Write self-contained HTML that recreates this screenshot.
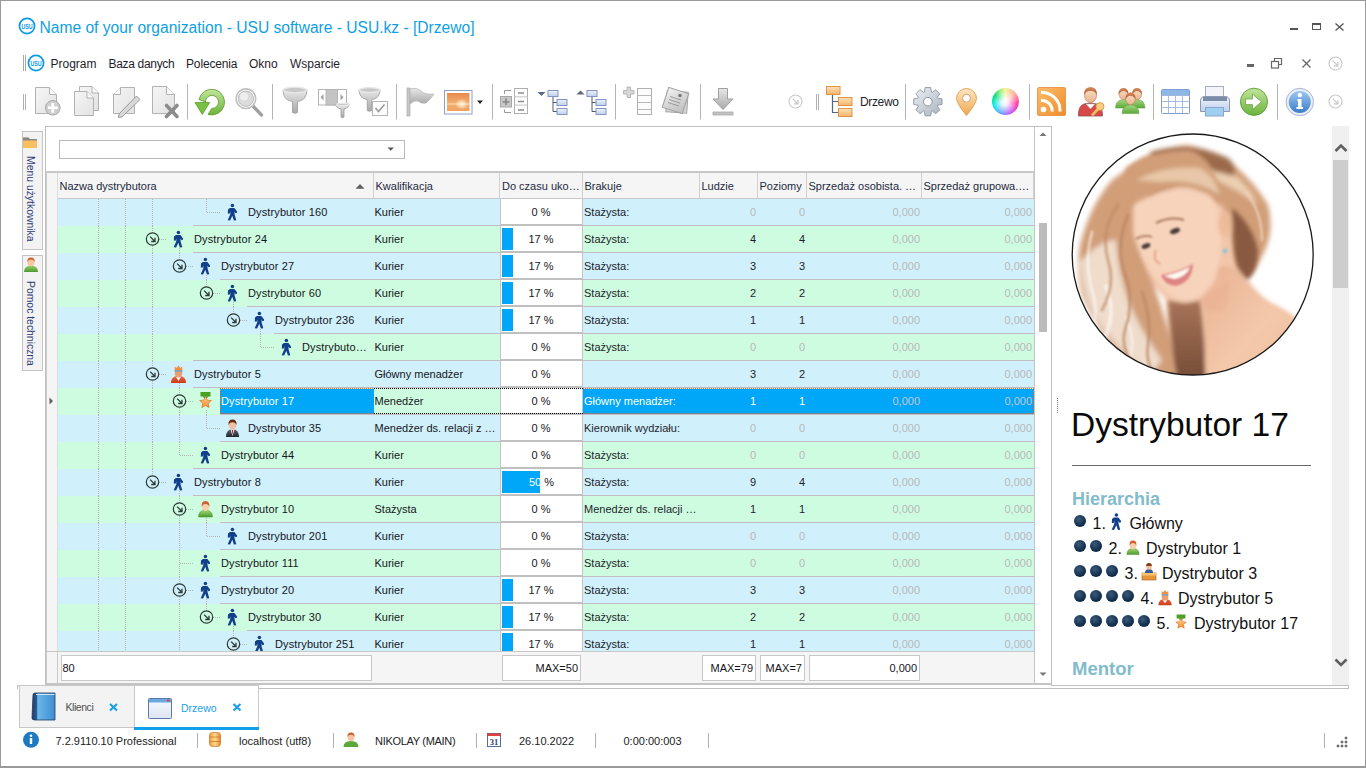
<!DOCTYPE html><html><head><meta charset="utf-8"><style>
*{margin:0;padding:0;box-sizing:border-box}
html,body{width:1366px;height:768px;overflow:hidden;background:#fff;font-family:"Liberation Sans", sans-serif;}
.a{position:absolute}
.t{position:absolute;white-space:nowrap;font-size:11px;line-height:13px;color:#161620}
svg{position:absolute;overflow:visible}
</style></head><body>
<div class="a" style="left:0;top:0;width:1366px;height:768px;border:1px solid #9a9a9a;border-bottom-width:2px"></div><svg style="left:18px;top:17px" width="18" height="18" viewBox="0 0 18 18"><circle cx="9" cy="9" r="7.6" fill="none" stroke="#0a9ae6" stroke-width="1.7"/><text x="3.4000000000000004" y="11.5" font-family="Liberation Sans" font-weight="bold" font-size="7" fill="#0a9ae6" textLength="11.2" lengthAdjust="spacingAndGlyphs">USU</text></svg><div class="t" style="left:39.5px;top:18.5px;font-size:15.6px;line-height:18px;color:#0f9fe4">Name of your organization - USU software - USU.kz - [Drzewo]</div><div class="a" style="left:1290px;top:28px;width:8px;height:2px;background:#555"></div><div class="a" style="left:1312px;top:23px;width:9px;height:7px;border:1px solid #555;border-top-width:2px"></div><svg style="left:1335px;top:23px" width="9" height="8" viewBox="0 0 9 8"><path d="M0.5 0.5L8.5 7.5M8.5 0.5L0.5 7.5" stroke="#555" stroke-width="1.3"/></svg><div class="a" style="left:23px;top:55px;width:1px;height:16px;background:#a8a8a8"></div><div class="a" style="left:25px;top:55px;width:1px;height:16px;background:#a8a8a8"></div><svg style="left:27px;top:54px" width="18" height="18" viewBox="0 0 18 18"><circle cx="9" cy="9" r="7.6" fill="none" stroke="#0a9ae6" stroke-width="1.7"/><text x="3.4000000000000004" y="11.5" font-family="Liberation Sans" font-weight="bold" font-size="7" fill="#0a9ae6" textLength="11.2" lengthAdjust="spacingAndGlyphs">USU</text></svg><div class="t" style="left:50.5px;top:57px;font-size:12px;line-height:15px;letter-spacing:0px;color:#1e1e2a">Program</div><div class="t" style="left:108.5px;top:57px;font-size:12px;line-height:15px;letter-spacing:-0.32px;color:#1e1e2a">Baza danych</div><div class="t" style="left:186px;top:57px;font-size:12px;line-height:15px;letter-spacing:-0.15px;color:#1e1e2a">Polecenia</div><div class="t" style="left:249px;top:57px;font-size:12px;line-height:15px;letter-spacing:0px;color:#1e1e2a">Okno</div><div class="t" style="left:290px;top:57px;font-size:12px;line-height:15px;letter-spacing:0px;color:#1e1e2a">Wsparcie</div><div class="a" style="left:1247px;top:64px;width:7px;height:3px;background:#666"></div><svg style="left:1271px;top:58px" width="12" height="11" viewBox="0 0 12 11"><path d="M3.5 3.5V0.5H10.5V6.5H7.5" fill="none" stroke="#666" stroke-width="1.2"/><rect x="0.5" y="3.5" width="7" height="6.5" fill="none" stroke="#666" stroke-width="1.2"/></svg><svg style="left:1302px;top:59px" width="9" height="9" viewBox="0 0 9 9"><path d="M0.5 0.5L8.5 8.5M8.5 0.5L0.5 8.5" stroke="#666" stroke-width="1.3"/></svg><svg style="left:1328.0px;top:56.0px" width="15.0" height="15.0" viewBox="-7.5 -7.5 15.0 15.0"><circle cx="0" cy="0" r="6.5" fill="none" stroke="#c8c8c8" stroke-width="1.1"/><path d="M-2.6 -2.6L2.4 2.4M2.4 -1.6V2.4H-1.6" fill="none" stroke="#c8c8c8" stroke-width="1.2000000000000002"/></svg><svg style="left:0;top:0" width="1366" height="130" viewBox="0 0 1366 130"><defs><linearGradient id="gpage" x1="0" y1="0" x2="1" y2="1"><stop offset="0" stop-color="#f6f6f6"/><stop offset="1" stop-color="#e2e2e2"/></linearGradient><linearGradient id="ggray" x1="0" y1="0" x2="0" y2="1"><stop offset="0" stop-color="#e8e8e8"/><stop offset="1" stop-color="#a8a8a8"/></linearGradient><linearGradient id="ggreen" x1="0" y1="0" x2="0" y2="1"><stop offset="0" stop-color="#c2e49a"/><stop offset="1" stop-color="#6cb43c"/></linearGradient><linearGradient id="gorange" x1="0" y1="0" x2="0" y2="1"><stop offset="0" stop-color="#fde2b8"/><stop offset="1" stop-color="#f5b46a"/></linearGradient><linearGradient id="gsun" x1="0" y1="0" x2="0" y2="1"><stop offset="0" stop-color="#e9894c"/><stop offset="0.6" stop-color="#f2b070"/><stop offset="1" stop-color="#f0a060"/></linearGradient><radialGradient id="gsun2" cx="0.65" cy="0.62" r="0.3"><stop offset="0" stop-color="#fffbe8"/><stop offset="1" stop-color="#fffbe8" stop-opacity="0"/></radialGradient><linearGradient id="gsilver" x1="0" y1="0" x2="1" y2="1"><stop offset="0" stop-color="#eef1f5"/><stop offset="1" stop-color="#aab2bd"/></linearGradient><linearGradient id="gpin" x1="0" y1="0" x2="0" y2="1"><stop offset="0" stop-color="#fde7c2"/><stop offset="1" stop-color="#f0a850"/></linearGradient><radialGradient id="gwhite" cx="0.5" cy="0.5" r="0.5"><stop offset="0" stop-color="#fff"/><stop offset="0.35" stop-color="#fff" stop-opacity="0.7"/><stop offset="1" stop-color="#fff" stop-opacity="0"/></radialGradient><linearGradient id="grss" x1="0" y1="0" x2="1" y2="1"><stop offset="0" stop-color="#fbbd6a"/><stop offset="1" stop-color="#f08c2c"/></linearGradient><linearGradient id="gblue" x1="0" y1="0" x2="0" y2="1"><stop offset="0" stop-color="#9cc8f0"/><stop offset="1" stop-color="#3d7cc8"/></linearGradient><linearGradient id="gtree" x1="0" y1="0" x2="0" y2="1"><stop offset="0" stop-color="#eef3fb"/><stop offset="1" stop-color="#bcd0ee"/></linearGradient><linearGradient id="gskin" x1="0" y1="0" x2="0" y2="1"><stop offset="0" stop-color="#fbe0c8"/><stop offset="1" stop-color="#eab48e"/></linearGradient><linearGradient id="ghair" x1="0" y1="0" x2="0" y2="1"><stop offset="0" stop-color="#d98a5a"/><stop offset="1" stop-color="#a85a34"/></linearGradient><linearGradient id="gbody" x1="0" y1="0" x2="0" y2="1"><stop offset="0" stop-color="#a8d880"/><stop offset="1" stop-color="#5aa83a"/></linearGradient></defs><path d="M23.5 94V110M25.5 94V110" stroke="#b0b0b0" stroke-width="1"/><path d="M187.5 84V119.5" stroke="#b4b4b4" stroke-width="1"/><path d="M272.5 84V119.5" stroke="#b4b4b4" stroke-width="1"/><path d="M396.5 84V119.5" stroke="#b4b4b4" stroke-width="1"/><path d="M492.5 84V119.5" stroke="#b4b4b4" stroke-width="1"/><path d="M615.5 84V119.5" stroke="#b4b4b4" stroke-width="1"/><path d="M700.5 84V119.5" stroke="#b4b4b4" stroke-width="1"/><path d="M905.5 84V119.5" stroke="#b4b4b4" stroke-width="1"/><path d="M1029.5 84V119.5" stroke="#b4b4b4" stroke-width="1"/><path d="M1153.5 84V119.5" stroke="#b4b4b4" stroke-width="1"/><path d="M1277.5 84V119.5" stroke="#b4b4b4" stroke-width="1"/><path d="M816.5 94V110M818.5 94V110" stroke="#b0b0b0" stroke-width="1"/><path d="M35.5 87.5H49.5L56.5 94.5V113.5H35.5Z" fill="url(#gpage)" stroke="#b2b2b2"/><path d="M49.5 87.5V94.5H56.5" fill="#fafafa" stroke="#b2b2b2"/><circle cx="52.8" cy="107.8" r="7.3" fill="#cfcfcf" stroke="#a8a8a8"/><path d="M52.8 103V112.6M48 107.8H57.6" stroke="#fff" stroke-width="2.6"/><path d="M52.8 103.2V112.4M48.2 107.8H57.4" stroke="#fff" stroke-width="2"/><path d="M79.5 86.5H92L98.5 93V110.5H79.5Z" fill="url(#gpage)" stroke="#b2b2b2"/><path d="M92 86.5V93H98.5" fill="#fafafa" stroke="#b2b2b2"/><path d="M74.5 91.5H87L93.5 98V115.5H74.5Z" fill="url(#gpage)" stroke="#b2b2b2"/><path d="M87 91.5V98H93.5" fill="#fafafa" stroke="#b2b2b2"/><path d="M120.5 87.5H134.5V113.5H113.5V94.5Z" fill="url(#gpage)" stroke="#b2b2b2"/><path d="M120.5 87.5V94.5H113.5" fill="#fafafa" stroke="#b2b2b2"/><path d="M136.5 96L140 99.5L122 117L118.5 117.5L119 114Z" fill="#d8d8d8" stroke="#9a9a9a" stroke-width="1"/><path d="M152.5 86.5H166.5L174.5 94.5V113.5H152.5Z" fill="url(#gpage)" stroke="#b2b2b2"/><path d="M166.5 86.5V94.5H174.5" fill="#fafafa" stroke="#b2b2b2"/><path d="M166.5 105.5L177 116.5M177 105.5L166.5 116.5" stroke="#8c8c8c" stroke-width="3.6" stroke-linecap="round"/><path d="M205.5 102 A6.5 6.5 0 1 1 211.7 108.4 L208 114.5 A12.9 12.9 0 1 0 199 99.5 Z" fill="url(#ggreen)" stroke="#5a9a30" stroke-width="0.8"/><path d="M195 102.5H209.6L202.3 114.5Z" fill="#78c040" stroke="#5a9a30" stroke-width="0.8"/><path d="M252 105L261.5 115" stroke="#a0a0a0" stroke-width="3.4" stroke-linecap="round"/><circle cx="245.9" cy="98.7" r="9.8" fill="#fff" stroke="#c0c0c0" stroke-width="1.6"/><circle cx="245.9" cy="98.7" r="7.6" fill="#dcdcdc" stroke="#b8b8b8"/><circle cx="244" cy="96.5" r="4" fill="#eeeeee"/><path d="M283.0 89.5 Q283.0 100.5 292.5 101.5 V112.5 Q295 114.0 297.5 112.5 V101.5 Q307.0 100.5 307.0 89.5 Z" fill="url(#ggray)" stroke="#9c9c9c" stroke-width="0.8"/><ellipse cx="295" cy="90.0" rx="11.5" ry="2.86" fill="#c8c8c8" stroke="#e8e8e8" stroke-width="1.4"/><rect x="318.5" y="89.5" width="28" height="15.5" fill="#fff" stroke="#b4b4b4"/><rect x="326" y="89.5" width="11.5" height="15.5" fill="#c4c4c4" stroke="#b4b4b4"/><path d="M323.5 94V100.5L320.5 97.2Z M340.5 94V100.5L343.5 97.2Z" fill="#a0a0a0"/><path d="M336.0 104 Q336.0 108 341.0 109 V117 Q342.5 118.5 344.0 117 V109 Q349.0 108 349.0 104 Z" fill="url(#ggray)" stroke="#9c9c9c" stroke-width="0.8"/><ellipse cx="342.5" cy="104.5" rx="6.0" ry="1.32" fill="#c8c8c8" stroke="#e8e8e8" stroke-width="1.4"/><path d="M359.0 89.5 Q359.0 98.5 367.25 99.5 V110.5 Q369.5 112.0 371.75 110.5 V99.5 Q380.0 98.5 380.0 89.5 Z" fill="url(#ggray)" stroke="#9c9c9c" stroke-width="0.8"/><ellipse cx="369.5" cy="90.0" rx="10.0" ry="2.42" fill="#c8c8c8" stroke="#e8e8e8" stroke-width="1.4"/><rect x="372.5" y="101.5" width="15" height="14" fill="#fcfcfc" stroke="#b4b4b4"/><path d="M375.5 108L378.5 111.5L384.5 104.5" fill="none" stroke="#9a9a9a" stroke-width="1.6"/><rect x="407" y="88" width="3" height="28" fill="#c8c8c8" stroke="#a8a8a8" stroke-width="0.7"/><path d="M410 89 Q417 87 421 91 Q425 95 434 94 Q430 100 426 103 Q421 104 418 101 Q414 100 410 104Z" fill="url(#ggray)" stroke="#b0b0b0" stroke-width="0.7"/><rect x="444.5" y="90.5" width="27.5" height="23.5" fill="#fff" stroke="#8aa0c8" stroke-width="1"/><rect x="447" y="93" width="22.5" height="18" fill="url(#gsun)"/><rect x="447" y="93" width="22.5" height="18" fill="url(#gsun2)"/><path d="M447 104H469.5" stroke="#fff4d8" stroke-width="0.8" opacity="0.8"/><path d="M477 100.5H483L480 104Z" fill="#222"/><path d="M504.5 94V90.5H511M504.5 109.5V112.5H511" fill="none" stroke="#9a9a9a" stroke-width="1"/><rect x="500.5" y="96.5" width="11" height="10.5" fill="#c8c8c8" stroke="#a8a8a8"/><path d="M506 98.5V105M502.8 101.8H509.2" stroke="#8c8c8c" stroke-width="1.8"/><rect x="514.5" y="88.5" width="13" height="25" fill="#fff" stroke="#b0b0b0"/><path d="M514.5 96.8H527.5M514.5 105.1H527.5" stroke="#c4c4c4"/><path d="M518 93H524M518 101.5H524M518 110H524" stroke="#8c8c8c" stroke-width="1.6"/><path d="M537.5 92H545.5L541.5 96Z" fill="#5c6a80"/><path d="M553.0 96V111.5H557.0M553.0 102.5H557.0" fill="none" stroke="#4e5a70" stroke-width="1"/><rect x="548.0" y="90.5" width="10" height="6" fill="url(#gtree)" stroke="#8494c4"/><rect x="557.0" y="99.5" width="10" height="6" fill="url(#gtree)" stroke="#8494c4"/><rect x="557.0" y="108.5" width="10" height="6" fill="url(#gtree)" stroke="#8494c4"/><path d="M576.5 94.5H584.5L580.5 90.5Z" fill="#5c6a80"/><path d="M592.0 96V111.5H596.0M592.0 102.5H596.0" fill="none" stroke="#4e5a70" stroke-width="1"/><rect x="587.0" y="90.5" width="10" height="6" fill="url(#gtree)" stroke="#8494c4"/><rect x="596.0" y="99.5" width="10" height="6" fill="url(#gtree)" stroke="#8494c4"/><rect x="596.0" y="108.5" width="10" height="6" fill="url(#gtree)" stroke="#8494c4"/><path d="M623.5 90.5H627V87H630.5V90.5H634V94H630.5V97.5H627V94H623.5Z" fill="#d8d8d8" stroke="#a8a8a8" stroke-width="0.8"/><rect x="637.5" y="88.5" width="14" height="26" fill="#fcfcfc" stroke="#b0b0b0"/><path d="M637.5 95.5H651.5M637.5 102.5H651.5M637.5 109.5H651.5" stroke="#b8b8b8"/><rect x="666.5" y="91.5" width="21" height="21" fill="#d4d4d4" stroke="#a8a8a8" transform="rotate(4 677 102)"/><defs><linearGradient id="gnote" x1="0" y1="0" x2="1" y2="1"><stop offset="0" stop-color="#f2f2f2"/><stop offset="1" stop-color="#bcbcbc"/></linearGradient></defs><rect x="665" y="90" width="21" height="21" fill="url(#gnote)" stroke="#a0a0a0" transform="rotate(18 675.5 100.5)"/><path d="M670 96.5L681 100M669 99.5L680 103M668 102.5L679 106" stroke="#8a8a8a" stroke-width="0.8"/><circle cx="680" cy="95.5" r="1.8" fill="#777"/><path d="M718.5 88.5H727.5V99H733L723 109.5L713 99H718.5Z" fill="url(#ggray)" stroke="#a0a0a0"/><rect x="713" y="112" width="20" height="3" fill="#c4c4c4" stroke="#a0a0a0" stroke-width="0.7"/><path d="M832.5 94V112.5H838.5M832.5 101.5H838.5" fill="none" stroke="#5a6478" stroke-width="1.2"/><rect x="826.5" y="86.5" width="13.5" height="8" fill="url(#gorange)" stroke="#e0944c"/><rect x="838.5" y="97.5" width="13.5" height="8" fill="url(#gorange)" stroke="#e0944c"/><rect x="838.5" y="108.5" width="13.5" height="8" fill="url(#gorange)" stroke="#e0944c"/><path d="M937.56 98.13 L942.02 98.87 L942.02 104.53 L937.56 105.27 L937.25 106.01 L939.89 109.68 L935.88 113.69 L932.21 111.05 L931.47 111.36 L930.73 115.82 L925.07 115.82 L924.33 111.36 L923.59 111.05 L919.92 113.69 L915.91 109.68 L918.55 106.01 L918.24 105.27 L913.78 104.53 L913.78 98.87 L918.24 98.13 L918.55 97.39 L915.91 93.72 L919.92 89.71 L923.59 92.35 L924.33 92.04 L925.07 87.58 L930.73 87.58 L931.47 92.04 L932.21 92.35 L935.88 89.71 L939.89 93.72 L937.25 97.39Z" fill="url(#gsilver)" stroke="#8c96a4" stroke-width="0.9" stroke-linejoin="round"/><circle cx="927.9" cy="101.7" r="4.3" fill="#fff" stroke="#8c96a4" stroke-width="1"/><path d="M966.5 115.5 Q957 104 956.5 98.5 A10 10 0 1 1 976.5 98.5 Q976 104 966.5 115.5Z" fill="url(#gpin)" stroke="#e09848" stroke-width="0.9"/><circle cx="966.5" cy="98.2" r="4" fill="#fff" stroke="#d8a070"/><defs><linearGradient id="cw1" x1="0" y1="0" x2="1" y2="0"><stop offset="0" stop-color="#00e070"/><stop offset="0.5" stop-color="#f4f0a0"/><stop offset="1" stop-color="#ff3c9c"/></linearGradient><linearGradient id="cw2" x1="0" y1="0" x2="0" y2="1"><stop offset="0" stop-color="#ffe080" stop-opacity="0.7"/><stop offset="0.5" stop-color="#fff" stop-opacity="0"/><stop offset="1" stop-color="#8080ff" stop-opacity="0.8"/></linearGradient><linearGradient id="cw3" x1="0" y1="0" x2="1" y2="0"><stop offset="0" stop-color="#00e0e8" stop-opacity="0.9"/><stop offset="0.4" stop-color="#00e0e8" stop-opacity="0"/></linearGradient></defs><rect x="1037.5" y="87.5" width="28" height="28" rx="1.5" fill="url(#grss)" stroke="#e8883a" stroke-width="0.8"/><circle cx="1043.5" cy="109.5" r="2.8" fill="#fff"/><path d="M1041 100.5 A10 10 0 0 1 1052 111.5" fill="none" stroke="#fff" stroke-width="3"/><path d="M1041 92.5 A18 18 0 0 1 1060 111.5" fill="none" stroke="#fff" stroke-width="3"/><path d="M1078.5 116 Q1078 106 1084 104 L1090.5 103 L1097 104 Q1102.5 106 1102.5 116Z" fill="#d8484a" stroke="#8a5050" stroke-width="0.8"/><path d="M1086 104L1090.5 109L1095 104Z" fill="#fff" stroke="#aaa" stroke-width="0.5"/><ellipse cx="1090.5" cy="95.5" rx="6" ry="7" fill="url(#gskin)" stroke="#b07050" stroke-width="0.6"/><path d="M1084.2 95 Q1083.5 87.5 1090.5 87 Q1097.5 87.5 1096.8 95 Q1095 90.5 1090.5 91 Q1086 90.5 1084.2 95Z" fill="url(#ghair)"/><circle cx="1100" cy="106.5" r="4" fill="#f6d080" stroke="#c89040" stroke-width="0.8"/><path d="M1098 109L1092 115.5" stroke="#f0c060" stroke-width="2.6"/><path d="M1115.5 108 Q1115.5 100 1123.5 99.5 Q1131.5 100 1131.5 108Z" fill="url(#gbody)" stroke="#6aa048" stroke-width="0.6"/><ellipse cx="1123.5" cy="94" rx="4.6" ry="5.6" fill="url(#gskin)" stroke="#b87858" stroke-width="0.5"/><path d="M1118.7 94.5 Q1118.5 88 1123.5 88 Q1128.5 88 1128.3 94.5 Q1126.5 91 1123.5 91 Q1120.5 91 1118.7 94.5Z" fill="url(#ghair)"/><path d="M1129 108 Q1129 100 1137 99.5 Q1145 100 1145 108Z" fill="url(#gbody)" stroke="#6aa048" stroke-width="0.6"/><ellipse cx="1137" cy="94" rx="4.6" ry="5.6" fill="url(#gskin)" stroke="#b87858" stroke-width="0.5"/><path d="M1132.2 94.5 Q1132 88 1137 88 Q1142 88 1141.8 94.5 Q1140 91 1137 91 Q1134 91 1132.2 94.5Z" fill="url(#ghair)"/><path d="M1122.1 113.6 Q1122.1 105.2 1130.5 104.675 Q1138.9 105.2 1138.9 113.6Z" fill="url(#gbody)" stroke="#6aa048" stroke-width="0.6"/><ellipse cx="1130.5" cy="98.9" rx="4.83" ry="5.88" fill="url(#gskin)" stroke="#b87858" stroke-width="0.5"/><path d="M1125.46 99.425 Q1125.25 92.6 1130.5 92.6 Q1135.75 92.6 1135.54 99.425 Q1133.65 95.75 1130.5 95.75 Q1127.35 95.75 1125.46 99.425Z" fill="url(#ghair)"/><rect x="1161.5" y="89.5" width="28" height="24" rx="1" fill="#fff" stroke="#7e9cd0"/><rect x="1162" y="90" width="27" height="5.5" fill="#8cb8e8"/><path d="M1161.5 95.5H1189.5M1161.5 101.5H1189.5M1161.5 107.5H1189.5M1168.5 89.5V113.5M1175.5 89.5V113.5M1182.5 89.5V113.5" stroke="#9cb4dc" stroke-width="0.9"/><rect x="1205.5" y="86.5" width="18" height="11" fill="#f4f4f8" stroke="#a8b0c0"/><path d="M1200.5 101 Q1200.5 96.5 1205 96.5 H1225 Q1229.5 96.5 1229.5 101 V111.5 H1200.5Z" fill="url(#gtree)" stroke="#8c98b4"/><rect x="1203" y="97" width="24" height="4" fill="#7c8ca8"/><rect x="1205.5" y="107.5" width="18" height="8.5" fill="#9ccff0" stroke="#8ca4c8"/><circle cx="1254" cy="101.8" r="13.6" fill="url(#ggreen)" stroke="#5e9c38" stroke-width="0.9"/><path d="M1245.5 99H1252.5V94L1261.5 101.8L1252.5 109.6V104.6H1245.5Z" fill="#fff" stroke="#5e9c38" stroke-width="0.7"/><circle cx="1299.8" cy="102" r="13.7" fill="#e8eef8" stroke="#a8b8d0" stroke-width="1"/><circle cx="1299.8" cy="102" r="11" fill="url(#gblue)"/><circle cx="1299.8" cy="95" r="2.2" fill="#fff"/><path d="M1297.5 99H1301.5V107H1303V109H1296.5V107H1298V101H1297.5Z" fill="#fff"/></svg><div class="t" style="left:860px;top:95px;font-size:12px;line-height:15px;letter-spacing:-0.35px;color:#1e1e2a">Drzewo</div><div class="a" style="left:991.8px;top:87.9px;width:27.6px;height:27.6px;border-radius:50%;background:radial-gradient(circle at 48% 52%,#fff 0%,rgba(255,255,255,0.85) 18%,rgba(255,255,255,0) 62%),conic-gradient(from 0deg,#f6f29a,#ffb0a0 50deg,#ff3ca0 100deg,#c060ff 160deg,#6aa0ff 200deg,#00e8f0 250deg,#00e070 300deg,#a0f080 335deg,#f6f29a)"></div><svg style="left:788.0px;top:94.0px" width="15.0" height="15.0" viewBox="-7.5 -7.5 15.0 15.0"><circle cx="0" cy="0" r="6.5" fill="none" stroke="#c8c8c8" stroke-width="1.1"/><path d="M-2.6 -2.6L2.4 2.4M2.4 -1.6V2.4H-1.6" fill="none" stroke="#c8c8c8" stroke-width="1.2000000000000002"/></svg><svg style="left:1328.0px;top:94.3px" width="15.0" height="15.0" viewBox="-7.5 -7.5 15.0 15.0"><circle cx="0" cy="0" r="6.5" fill="none" stroke="#c8c8c8" stroke-width="1.1"/><path d="M-2.6 -2.6L2.4 2.4M2.4 -1.6V2.4H-1.6" fill="none" stroke="#c8c8c8" stroke-width="1.2000000000000002"/></svg><div class="a" style="left:22px;top:131px;width:21px;height:119px;border:1px solid #c4c4c4;background:#f3f3f3"></div><div class="a" style="left:22px;top:255px;width:21px;height:116px;border:1px solid #c4c4c4;background:#f3f3f3"></div><svg style="left:0;top:0" width="60" height="380" viewBox="0 0 60 380"><path d="M23 137.5H28.5L30 139H37V148H23Z" fill="#f8c060"/><path d="M23 137.5H28.5L30 139H37V140.5H23Z" fill="#888"/><path d="M24 272 Q24 265.5 31 265.5 Q38 265.5 38 272Z" fill="url(#gbody2)"/><ellipse cx="31" cy="262" rx="3.6" ry="4.3" fill="#f6c8a0"/><path d="M27.3 262 Q27 257.5 31 257.5 Q35 257.5 34.7 262 Q33.5 259.5 31 259.8 Q28.5 259.5 27.3 262Z" fill="#c86838"/><defs><linearGradient id="gbody2" x1="0" y1="0" x2="0" y2="1"><stop offset="0" stop-color="#9ad070"/><stop offset="1" stop-color="#4a9a2a"/></linearGradient></defs></svg><div class="t" style="left:35.5px;top:156px;transform-origin:0 0;transform:rotate(90deg);font-size:10.4px;line-height:12px;color:#2a3c78">Menu użytkownika</div><div class="t" style="left:35.5px;top:281px;transform-origin:0 0;transform:rotate(90deg);font-size:10.4px;line-height:12px;color:#2a3c78">Pomoc techniczna</div><div class="a" style="left:45px;top:126px;width:1007px;height:560px;border:1px solid #c0c0c0;border-bottom:none;background:#fff"></div><div class="a" style="left:1034px;top:126px;width:1px;height:559px;background:#c4c4c4"></div><div class="a" style="left:59px;top:140px;width:346px;height:19px;border:1px solid #b8b8b8;background:#fff"></div><svg style="left:386px;top:146px" width="10" height="6" viewBox="0 0 10 6"><path d="M1.5 1.5H8L4.75 4.8Z" fill="#555"/></svg><svg style="left:1038px;top:130px" width="10" height="8" viewBox="0 0 10 8"><path d="M1.5 6H8.5L5 2.5Z" fill="#777"/></svg><svg style="left:1038px;top:670px" width="10" height="8" viewBox="0 0 10 8"><path d="M1.5 2.5H8.5L5 6Z" fill="#777"/></svg><div class="a" style="left:1039px;top:223px;width:8px;height:109px;background:#bcbcbc"></div><div class="a" style="left:46px;top:171px;width:988px;height:2px;background:#c8c8c8"></div><div class="a" style="left:46px;top:173px;width:988px;height:25px;background:#f5f5f5"></div><div class="a" style="left:46px;top:198px;width:988px;height:1px;background:#c8c8c8"></div><div class="a" style="left:46px;top:173px;width:11px;height:510px;background:#f5f5f5"></div><div class="a" style="left:57px;top:173px;width:1px;height:510px;background:#dcdcdc"></div><div class="a" style="left:373px;top:173px;width:1px;height:25px;background:#d0d0d0"></div><div class="a" style="left:499px;top:173px;width:1px;height:25px;background:#d0d0d0"></div><div class="a" style="left:582px;top:173px;width:1px;height:25px;background:#d0d0d0"></div><div class="a" style="left:699px;top:173px;width:1px;height:25px;background:#d0d0d0"></div><div class="a" style="left:757px;top:173px;width:1px;height:25px;background:#d0d0d0"></div><div class="a" style="left:806px;top:173px;width:1px;height:25px;background:#d0d0d0"></div><div class="a" style="left:921px;top:173px;width:1px;height:25px;background:#d0d0d0"></div><div class="a" style="left:1033px;top:173px;width:1px;height:25px;background:#d0d0d0"></div><svg style="left:354px;top:183px" width="12" height="7" viewBox="0 0 12 7"><path d="M1.5 5.8H10.5L6 1Z" fill="#606060"/></svg><div class="t" style="left:59.5px;top:180px;color:#1e2a40">Nazwa dystrybutora</div><div class="t" style="left:375.5px;top:180px;color:#1e2a40">Kwalifikacja</div><div class="t" style="left:502px;top:180px;color:#1e2a40">Do czasu uko…</div><div class="t" style="left:584.5px;top:180px;color:#1e2a40">Brakuje</div><div class="t" style="left:701.5px;top:180px;color:#1e2a40">Ludzie</div><div class="t" style="left:759.5px;top:180px;color:#1e2a40">Poziomy</div><div class="t" style="left:808.5px;top:180px;color:#1e2a40">Sprzedaż osobista. …</div><div class="t" style="left:923.5px;top:180px;color:#1e2a40">Sprzedaż grupowa.…</div><div class="a" style="left:58px;top:199px;width:976px;height:27px;background:#d0f0fc"></div><div class="a" style="left:193px;top:225px;width:841px;height:1px;background:#c4bcc4"></div><div class="a" style="left:500px;top:199px;width:83px;height:27px;border-left:1px solid #c4c4c4;border-right:1px solid #c4c4c4;border-bottom:2px solid #c0c0c0;background:#fff"></div><div class="t" style="left:248px;top:206px;letter-spacing:0.12px;color:#161622">Dystrybutor 160</div><div class="t" style="left:374.5px;top:206px">Kurier</div><div class="t" style="left:501px;top:206px;width:80px;text-align:center">0 %</div><div class="t" style="left:584px;top:206px;color:#1e1e2c">Stażysta:</div><div class="t" style="left:700px;top:206px;width:56px;text-align:right;color:#b8b8b8">0</div><div class="t" style="left:758px;top:206px;width:47px;text-align:right;color:#b8b8b8">0</div><div class="t" style="left:807px;top:206px;width:113px;text-align:right;color:#b8b8b8">0,000</div><div class="t" style="left:922px;top:206px;width:110px;text-align:right;color:#b8b8b8">0,000</div><div class="a" style="left:58px;top:226px;width:976px;height:27px;background:#cefce0"></div><div class="a" style="left:193px;top:252px;width:841px;height:1px;background:#c4bcc4"></div><div class="a" style="left:500px;top:226px;width:83px;height:27px;border-left:1px solid #c4c4c4;border-right:1px solid #c4c4c4;border-bottom:2px solid #c0c0c0;background:#fff"></div><div class="a" style="left:502px;top:228px;width:11px;height:22px;background:#00a6f8"></div><div class="t" style="left:194px;top:233px;letter-spacing:0.12px;color:#161622">Dystrybutor 24</div><div class="t" style="left:374.5px;top:233px">Kurier</div><div class="t" style="left:501px;top:233px;width:80px;text-align:center">17 %</div><div class="t" style="left:584px;top:233px;color:#1e1e2c">Stażysta:</div><div class="t" style="left:700px;top:233px;width:56px;text-align:right;color:#1e1e2c">4</div><div class="t" style="left:758px;top:233px;width:47px;text-align:right;color:#1e1e2c">4</div><div class="t" style="left:807px;top:233px;width:113px;text-align:right;color:#b8b8b8">0,000</div><div class="t" style="left:922px;top:233px;width:110px;text-align:right;color:#b8b8b8">0,000</div><div class="a" style="left:58px;top:253px;width:976px;height:27px;background:#d0f0fc"></div><div class="a" style="left:220px;top:279px;width:814px;height:1px;background:#c4bcc4"></div><div class="a" style="left:500px;top:253px;width:83px;height:27px;border-left:1px solid #c4c4c4;border-right:1px solid #c4c4c4;border-bottom:2px solid #c0c0c0;background:#fff"></div><div class="a" style="left:502px;top:255px;width:11px;height:22px;background:#00a6f8"></div><div class="t" style="left:221px;top:260px;letter-spacing:0.12px;color:#161622">Dystrybutor 27</div><div class="t" style="left:374.5px;top:260px">Kurier</div><div class="t" style="left:501px;top:260px;width:80px;text-align:center">17 %</div><div class="t" style="left:584px;top:260px;color:#1e1e2c">Stażysta:</div><div class="t" style="left:700px;top:260px;width:56px;text-align:right;color:#1e1e2c">3</div><div class="t" style="left:758px;top:260px;width:47px;text-align:right;color:#1e1e2c">3</div><div class="t" style="left:807px;top:260px;width:113px;text-align:right;color:#b8b8b8">0,000</div><div class="t" style="left:922px;top:260px;width:110px;text-align:right;color:#b8b8b8">0,000</div><div class="a" style="left:58px;top:280px;width:976px;height:27px;background:#cefce0"></div><div class="a" style="left:247px;top:306px;width:787px;height:1px;background:#c4bcc4"></div><div class="a" style="left:500px;top:280px;width:83px;height:27px;border-left:1px solid #c4c4c4;border-right:1px solid #c4c4c4;border-bottom:2px solid #c0c0c0;background:#fff"></div><div class="a" style="left:502px;top:282px;width:11px;height:22px;background:#00a6f8"></div><div class="t" style="left:248px;top:287px;letter-spacing:0.12px;color:#161622">Dystrybutor 60</div><div class="t" style="left:374.5px;top:287px">Kurier</div><div class="t" style="left:501px;top:287px;width:80px;text-align:center">17 %</div><div class="t" style="left:584px;top:287px;color:#1e1e2c">Stażysta:</div><div class="t" style="left:700px;top:287px;width:56px;text-align:right;color:#1e1e2c">2</div><div class="t" style="left:758px;top:287px;width:47px;text-align:right;color:#1e1e2c">2</div><div class="t" style="left:807px;top:287px;width:113px;text-align:right;color:#b8b8b8">0,000</div><div class="t" style="left:922px;top:287px;width:110px;text-align:right;color:#b8b8b8">0,000</div><div class="a" style="left:58px;top:307px;width:976px;height:27px;background:#d0f0fc"></div><div class="a" style="left:274px;top:333px;width:760px;height:1px;background:#c4bcc4"></div><div class="a" style="left:500px;top:307px;width:83px;height:27px;border-left:1px solid #c4c4c4;border-right:1px solid #c4c4c4;border-bottom:2px solid #c0c0c0;background:#fff"></div><div class="a" style="left:502px;top:309px;width:11px;height:22px;background:#00a6f8"></div><div class="t" style="left:275px;top:314px;letter-spacing:0.12px;color:#161622">Dystrybutor 236</div><div class="t" style="left:374.5px;top:314px">Kurier</div><div class="t" style="left:501px;top:314px;width:80px;text-align:center">17 %</div><div class="t" style="left:584px;top:314px;color:#1e1e2c">Stażysta:</div><div class="t" style="left:700px;top:314px;width:56px;text-align:right;color:#1e1e2c">1</div><div class="t" style="left:758px;top:314px;width:47px;text-align:right;color:#1e1e2c">1</div><div class="t" style="left:807px;top:314px;width:113px;text-align:right;color:#b8b8b8">0,000</div><div class="t" style="left:922px;top:314px;width:110px;text-align:right;color:#b8b8b8">0,000</div><div class="a" style="left:58px;top:334px;width:976px;height:27px;background:#cefce0"></div><div class="a" style="left:193px;top:360px;width:841px;height:1px;background:#c4bcc4"></div><div class="a" style="left:500px;top:334px;width:83px;height:27px;border-left:1px solid #c4c4c4;border-right:1px solid #c4c4c4;border-bottom:2px solid #c0c0c0;background:#fff"></div><div class="t" style="left:302px;top:341px;letter-spacing:0.12px;color:#161622">Dystrybuto…</div><div class="t" style="left:374.5px;top:341px">Kurier</div><div class="t" style="left:501px;top:341px;width:80px;text-align:center">0 %</div><div class="t" style="left:584px;top:341px;color:#1e1e2c">Stażysta:</div><div class="t" style="left:700px;top:341px;width:56px;text-align:right;color:#b8b8b8">0</div><div class="t" style="left:758px;top:341px;width:47px;text-align:right;color:#b8b8b8">0</div><div class="t" style="left:807px;top:341px;width:113px;text-align:right;color:#b8b8b8">0,000</div><div class="t" style="left:922px;top:341px;width:110px;text-align:right;color:#b8b8b8">0,000</div><div class="a" style="left:58px;top:361px;width:976px;height:27px;background:#d0f0fc"></div><div class="a" style="left:193px;top:387px;width:841px;height:1px;background:#c4bcc4"></div><div class="a" style="left:500px;top:361px;width:83px;height:27px;border-left:1px solid #c4c4c4;border-right:1px solid #c4c4c4;border-bottom:2px solid #c0c0c0;background:#fff"></div><div class="t" style="left:194px;top:368px;letter-spacing:0.12px;color:#161622">Dystrybutor 5</div><div class="t" style="left:374.5px;top:368px">Główny menadżer</div><div class="t" style="left:501px;top:368px;width:80px;text-align:center">0 %</div><div class="t" style="left:584px;top:368px;color:#1e1e2c"></div><div class="t" style="left:700px;top:368px;width:56px;text-align:right;color:#1e1e2c">3</div><div class="t" style="left:758px;top:368px;width:47px;text-align:right;color:#1e1e2c">2</div><div class="t" style="left:807px;top:368px;width:113px;text-align:right;color:#b8b8b8">0,000</div><div class="t" style="left:922px;top:368px;width:110px;text-align:right;color:#b8b8b8">0,000</div><div class="a" style="left:58px;top:388px;width:976px;height:27px;background:#cefce0"></div><div class="a" style="left:220px;top:414px;width:814px;height:1px;background:#c4bcc4"></div><div class="a" style="left:500px;top:388px;width:83px;height:27px;border-left:1px solid #c4c4c4;border-right:1px solid #c4c4c4;border-bottom:2px solid #c0c0c0;background:#fff"></div><div class="a" style="left:220px;top:389px;width:154px;height:25px;background:#00a6f8"></div><div class="a" style="left:583px;top:389px;width:451px;height:25px;background:#00a6f8"></div><div class="t" style="left:221px;top:395px;letter-spacing:0.12px;color:#fff">Dystrybutor 17</div><div class="t" style="left:374.5px;top:395px">Menedżer</div><div class="t" style="left:501px;top:395px;width:80px;text-align:center">0 %</div><div class="t" style="left:584px;top:395px;color:#fff">Główny menadżer:</div><div class="t" style="left:700px;top:395px;width:56px;text-align:right;color:#fff">1</div><div class="t" style="left:758px;top:395px;width:47px;text-align:right;color:#fff">1</div><div class="t" style="left:807px;top:395px;width:113px;text-align:right;color:#c0c8d0">0,000</div><div class="t" style="left:922px;top:395px;width:110px;text-align:right;color:#c0c8d0">0,000</div><div class="a" style="left:220px;top:388px;width:154px;height:1px;background:repeating-linear-gradient(90deg,#f06020 0 1px,transparent 1px 2px)"></div><div class="a" style="left:220px;top:413px;width:154px;height:1px;background:repeating-linear-gradient(90deg,#f06020 0 1px,transparent 1px 2px)"></div><div class="a" style="left:220px;top:388px;width:1px;height:26px;background:repeating-linear-gradient(180deg,#f06020 0 1px,transparent 1px 2px)"></div><div class="a" style="left:374px;top:388px;width:209px;height:1px;background:repeating-linear-gradient(90deg,#000 0 1px,transparent 1px 2px)"></div><div class="a" style="left:374px;top:413px;width:209px;height:1px;background:repeating-linear-gradient(90deg,#000 0 1px,transparent 1px 2px)"></div><div class="a" style="left:583px;top:388px;width:451px;height:1px;background:repeating-linear-gradient(90deg,#f06020 0 1px,transparent 1px 2px)"></div><div class="a" style="left:583px;top:413px;width:451px;height:1px;background:repeating-linear-gradient(90deg,#f06020 0 1px,transparent 1px 2px)"></div><div class="a" style="left:1033px;top:388px;width:1px;height:26px;background:repeating-linear-gradient(180deg,#f06020 0 1px,transparent 1px 2px)"></div><div class="a" style="left:58px;top:415px;width:976px;height:27px;background:#d0f0fc"></div><div class="a" style="left:220px;top:441px;width:814px;height:1px;background:#c4bcc4"></div><div class="a" style="left:500px;top:415px;width:83px;height:27px;border-left:1px solid #c4c4c4;border-right:1px solid #c4c4c4;border-bottom:2px solid #c0c0c0;background:#fff"></div><div class="t" style="left:248px;top:422px;letter-spacing:0.12px;color:#161622">Dystrybutor 35</div><div class="t" style="left:374.5px;top:422px">Menedżer ds. relacji z …</div><div class="t" style="left:501px;top:422px;width:80px;text-align:center">0 %</div><div class="t" style="left:584px;top:422px;color:#1e1e2c">Kierownik wydziału:</div><div class="t" style="left:700px;top:422px;width:56px;text-align:right;color:#b8b8b8">0</div><div class="t" style="left:758px;top:422px;width:47px;text-align:right;color:#b8b8b8">0</div><div class="t" style="left:807px;top:422px;width:113px;text-align:right;color:#b8b8b8">0,000</div><div class="t" style="left:922px;top:422px;width:110px;text-align:right;color:#b8b8b8">0,000</div><div class="a" style="left:58px;top:442px;width:976px;height:27px;background:#cefce0"></div><div class="a" style="left:193px;top:468px;width:841px;height:1px;background:#c4bcc4"></div><div class="a" style="left:500px;top:442px;width:83px;height:27px;border-left:1px solid #c4c4c4;border-right:1px solid #c4c4c4;border-bottom:2px solid #c0c0c0;background:#fff"></div><div class="t" style="left:221px;top:449px;letter-spacing:0.12px;color:#161622">Dystrybutor 44</div><div class="t" style="left:374.5px;top:449px">Kurier</div><div class="t" style="left:501px;top:449px;width:80px;text-align:center">0 %</div><div class="t" style="left:584px;top:449px;color:#1e1e2c">Stażysta:</div><div class="t" style="left:700px;top:449px;width:56px;text-align:right;color:#b8b8b8">0</div><div class="t" style="left:758px;top:449px;width:47px;text-align:right;color:#b8b8b8">0</div><div class="t" style="left:807px;top:449px;width:113px;text-align:right;color:#b8b8b8">0,000</div><div class="t" style="left:922px;top:449px;width:110px;text-align:right;color:#b8b8b8">0,000</div><div class="a" style="left:58px;top:469px;width:976px;height:27px;background:#d0f0fc"></div><div class="a" style="left:193px;top:495px;width:841px;height:1px;background:#c4bcc4"></div><div class="a" style="left:500px;top:469px;width:83px;height:27px;border-left:1px solid #c4c4c4;border-right:1px solid #c4c4c4;border-bottom:2px solid #c0c0c0;background:#fff"></div><div class="a" style="left:502px;top:471px;width:38px;height:22px;background:#00a6f8"></div><div class="t" style="left:194px;top:476px;letter-spacing:0.12px;color:#161622">Dystrybutor 8</div><div class="t" style="left:374.5px;top:476px">Kurier</div><div class="t" style="left:501px;top:476px;width:80px;text-align:center;padding-left:1px"><span style="color:#fff">50</span> %</div><div class="t" style="left:584px;top:476px;color:#1e1e2c">Stażysta:</div><div class="t" style="left:700px;top:476px;width:56px;text-align:right;color:#1e1e2c">9</div><div class="t" style="left:758px;top:476px;width:47px;text-align:right;color:#1e1e2c">4</div><div class="t" style="left:807px;top:476px;width:113px;text-align:right;color:#b8b8b8">0,000</div><div class="t" style="left:922px;top:476px;width:110px;text-align:right;color:#b8b8b8">0,000</div><div class="a" style="left:58px;top:496px;width:976px;height:27px;background:#cefce0"></div><div class="a" style="left:220px;top:522px;width:814px;height:1px;background:#c4bcc4"></div><div class="a" style="left:500px;top:496px;width:83px;height:27px;border-left:1px solid #c4c4c4;border-right:1px solid #c4c4c4;border-bottom:2px solid #c0c0c0;background:#fff"></div><div class="t" style="left:221px;top:503px;letter-spacing:0.12px;color:#161622">Dystrybutor 10</div><div class="t" style="left:374.5px;top:503px">Stażysta</div><div class="t" style="left:501px;top:503px;width:80px;text-align:center">0 %</div><div class="t" style="left:584px;top:503px;color:#1e1e2c">Menedżer ds. relacji …</div><div class="t" style="left:700px;top:503px;width:56px;text-align:right;color:#1e1e2c">1</div><div class="t" style="left:758px;top:503px;width:47px;text-align:right;color:#1e1e2c">1</div><div class="t" style="left:807px;top:503px;width:113px;text-align:right;color:#b8b8b8">0,000</div><div class="t" style="left:922px;top:503px;width:110px;text-align:right;color:#b8b8b8">0,000</div><div class="a" style="left:58px;top:523px;width:976px;height:27px;background:#d0f0fc"></div><div class="a" style="left:220px;top:549px;width:814px;height:1px;background:#c4bcc4"></div><div class="a" style="left:500px;top:523px;width:83px;height:27px;border-left:1px solid #c4c4c4;border-right:1px solid #c4c4c4;border-bottom:2px solid #c0c0c0;background:#fff"></div><div class="t" style="left:248px;top:530px;letter-spacing:0.12px;color:#161622">Dystrybutor 201</div><div class="t" style="left:374.5px;top:530px">Kurier</div><div class="t" style="left:501px;top:530px;width:80px;text-align:center">0 %</div><div class="t" style="left:584px;top:530px;color:#1e1e2c">Stażysta:</div><div class="t" style="left:700px;top:530px;width:56px;text-align:right;color:#b8b8b8">0</div><div class="t" style="left:758px;top:530px;width:47px;text-align:right;color:#b8b8b8">0</div><div class="t" style="left:807px;top:530px;width:113px;text-align:right;color:#b8b8b8">0,000</div><div class="t" style="left:922px;top:530px;width:110px;text-align:right;color:#b8b8b8">0,000</div><div class="a" style="left:58px;top:550px;width:976px;height:27px;background:#cefce0"></div><div class="a" style="left:220px;top:576px;width:814px;height:1px;background:#c4bcc4"></div><div class="a" style="left:500px;top:550px;width:83px;height:27px;border-left:1px solid #c4c4c4;border-right:1px solid #c4c4c4;border-bottom:2px solid #c0c0c0;background:#fff"></div><div class="t" style="left:221px;top:557px;letter-spacing:0.12px;color:#161622">Dystrybutor 111</div><div class="t" style="left:374.5px;top:557px">Kurier</div><div class="t" style="left:501px;top:557px;width:80px;text-align:center">0 %</div><div class="t" style="left:584px;top:557px;color:#1e1e2c">Stażysta:</div><div class="t" style="left:700px;top:557px;width:56px;text-align:right;color:#b8b8b8">0</div><div class="t" style="left:758px;top:557px;width:47px;text-align:right;color:#b8b8b8">0</div><div class="t" style="left:807px;top:557px;width:113px;text-align:right;color:#b8b8b8">0,000</div><div class="t" style="left:922px;top:557px;width:110px;text-align:right;color:#b8b8b8">0,000</div><div class="a" style="left:58px;top:577px;width:976px;height:27px;background:#d0f0fc"></div><div class="a" style="left:220px;top:603px;width:814px;height:1px;background:#c4bcc4"></div><div class="a" style="left:500px;top:577px;width:83px;height:27px;border-left:1px solid #c4c4c4;border-right:1px solid #c4c4c4;border-bottom:2px solid #c0c0c0;background:#fff"></div><div class="a" style="left:502px;top:579px;width:11px;height:22px;background:#00a6f8"></div><div class="t" style="left:221px;top:584px;letter-spacing:0.12px;color:#161622">Dystrybutor 20</div><div class="t" style="left:374.5px;top:584px">Kurier</div><div class="t" style="left:501px;top:584px;width:80px;text-align:center">17 %</div><div class="t" style="left:584px;top:584px;color:#1e1e2c">Stażysta:</div><div class="t" style="left:700px;top:584px;width:56px;text-align:right;color:#1e1e2c">3</div><div class="t" style="left:758px;top:584px;width:47px;text-align:right;color:#1e1e2c">3</div><div class="t" style="left:807px;top:584px;width:113px;text-align:right;color:#b8b8b8">0,000</div><div class="t" style="left:922px;top:584px;width:110px;text-align:right;color:#b8b8b8">0,000</div><div class="a" style="left:58px;top:604px;width:976px;height:27px;background:#cefce0"></div><div class="a" style="left:247px;top:630px;width:787px;height:1px;background:#c4bcc4"></div><div class="a" style="left:500px;top:604px;width:83px;height:27px;border-left:1px solid #c4c4c4;border-right:1px solid #c4c4c4;border-bottom:2px solid #c0c0c0;background:#fff"></div><div class="a" style="left:502px;top:606px;width:11px;height:22px;background:#00a6f8"></div><div class="t" style="left:248px;top:611px;letter-spacing:0.12px;color:#161622">Dystrybutor 30</div><div class="t" style="left:374.5px;top:611px">Kurier</div><div class="t" style="left:501px;top:611px;width:80px;text-align:center">17 %</div><div class="t" style="left:584px;top:611px;color:#1e1e2c">Stażysta:</div><div class="t" style="left:700px;top:611px;width:56px;text-align:right;color:#1e1e2c">2</div><div class="t" style="left:758px;top:611px;width:47px;text-align:right;color:#1e1e2c">2</div><div class="t" style="left:807px;top:611px;width:113px;text-align:right;color:#b8b8b8">0,000</div><div class="t" style="left:922px;top:611px;width:110px;text-align:right;color:#b8b8b8">0,000</div><div class="a" style="left:58px;top:631px;width:976px;height:27px;background:#d0f0fc"></div><div class="a" style="left:500px;top:631px;width:83px;height:27px;border-left:1px solid #c4c4c4;border-right:1px solid #c4c4c4;border-bottom:2px solid #c0c0c0;background:#fff"></div><div class="a" style="left:502px;top:633px;width:11px;height:22px;background:#00a6f8"></div><div class="t" style="left:275px;top:638px;letter-spacing:0.12px;color:#161622">Dystrybutor 251</div><div class="t" style="left:374.5px;top:638px">Kurier</div><div class="t" style="left:501px;top:638px;width:80px;text-align:center">17 %</div><div class="t" style="left:584px;top:638px;color:#1e1e2c">Stażysta:</div><div class="t" style="left:700px;top:638px;width:56px;text-align:right;color:#1e1e2c">1</div><div class="t" style="left:758px;top:638px;width:47px;text-align:right;color:#1e1e2c">1</div><div class="t" style="left:807px;top:638px;width:113px;text-align:right;color:#b8b8b8">0,000</div><div class="t" style="left:922px;top:638px;width:110px;text-align:right;color:#b8b8b8">0,000</div><div class="a" style="left:46px;top:651px;width:988px;height:1px;background:#c8c8c8"></div><div class="a" style="left:46px;top:652px;width:988px;height:31px;background:#f5f5f5"></div><div class="a" style="left:57px;top:652px;width:1px;height:31px;background:#c8c8c8"></div><div class="a" style="left:46px;top:683px;width:988px;height:2px;background:#c4c4c4"></div><svg style="left:0;top:0" width="1366" height="660" viewBox="0 0 1366 660"><defs><clipPath id="gclip"><rect x="58" y="199" width="976" height="452"/></clipPath></defs><g clip-path="url(#gclip)"><defs><linearGradient id="gking" x1="0" y1="0" x2="0" y2="1"><stop offset="0" stop-color="#f06a40"/><stop offset="1" stop-color="#c83a1a"/></linearGradient><linearGradient id="gstar" x1="0" y1="0" x2="0" y2="1"><stop offset="0" stop-color="#ffd898"/><stop offset="1" stop-color="#f88a30"/></linearGradient><linearGradient id="gsuit" x1="0" y1="0" x2="0" y2="1"><stop offset="0" stop-color="#606a74"/><stop offset="1" stop-color="#20262c"/></linearGradient><linearGradient id="gusr" x1="0" y1="0" x2="0" y2="1"><stop offset="0" stop-color="#a4d878"/><stop offset="1" stop-color="#4c9c2c"/></linearGradient></defs><path d="M98.5 199 V226" stroke="#b4b4b8" stroke-width="1" stroke-dasharray="1 1"/><path d="M125.5 199 V226" stroke="#b4b4b8" stroke-width="1" stroke-dasharray="1 1"/><path d="M152.5 199 V226" stroke="#b4b4b8" stroke-width="1" stroke-dasharray="1 1"/><path d="M206.5 199 V212" stroke="#b4b4b8" stroke-width="1" stroke-dasharray="1 1"/><path d="M207.0 212.5 H220.0" stroke="#b4b4b8" stroke-width="1" stroke-dasharray="1 1"/><circle cx="232.4" cy="205.5" r="1.75" fill="#123f8a"/><path d="M229.90 208.00 L234.40 208.00 L237.10 211.40 L236.90 212.80 L235.50 213.20 L234.50 211.60 L234.60 214.60 L236.30 220.20 L233.90 220.40 L232.30 215.80 L230.10 220.40 L227.70 220.20 L230.30 214.20 L230.30 211.20 L229.60 213.80 L227.80 213.60 L228.00 209.60Z" fill="#123f8a"/><path d="M98.5 226 V253" stroke="#b4b4b8" stroke-width="1" stroke-dasharray="1 1"/><path d="M125.5 226 V253" stroke="#b4b4b8" stroke-width="1" stroke-dasharray="1 1"/><path d="M152.5 226 V253" stroke="#b4b4b8" stroke-width="1" stroke-dasharray="1 1"/><path d="M152.5 226 V239" stroke="#b4b4b8" stroke-width="1" stroke-dasharray="1 1"/><path d="M159.0 239.5 H166.0" stroke="#b4b4b8" stroke-width="1" stroke-dasharray="1 1"/><path d="M179.5 248 V253" stroke="#b4b4b8" stroke-width="1" stroke-dasharray="1 1"/><circle cx="152.5" cy="239" r="6.2" fill="#cefce0" stroke="#2c3a36" stroke-width="1.2"/><path d="M150.1 236.6 L154.8 241.3 M155.0 237.7 V241.5 H151.2" fill="none" stroke="#2c3a36" stroke-width="1.3"/><circle cx="178.4" cy="232.5" r="1.75" fill="#123f8a"/><path d="M175.90 235.00 L180.40 235.00 L183.10 238.40 L182.90 239.80 L181.50 240.20 L180.50 238.60 L180.60 241.60 L182.30 247.20 L179.90 247.40 L178.30 242.80 L176.10 247.40 L173.70 247.20 L176.30 241.20 L176.30 238.20 L175.60 240.80 L173.80 240.60 L174.00 236.60Z" fill="#123f8a"/><path d="M98.5 253 V280" stroke="#b4b4b8" stroke-width="1" stroke-dasharray="1 1"/><path d="M125.5 253 V280" stroke="#b4b4b8" stroke-width="1" stroke-dasharray="1 1"/><path d="M152.5 253 V280" stroke="#b4b4b8" stroke-width="1" stroke-dasharray="1 1"/><path d="M179.5 253 V266" stroke="#b4b4b8" stroke-width="1" stroke-dasharray="1 1"/><path d="M186.0 266.5 H193.0" stroke="#b4b4b8" stroke-width="1" stroke-dasharray="1 1"/><path d="M206.5 275 V280" stroke="#b4b4b8" stroke-width="1" stroke-dasharray="1 1"/><circle cx="179.5" cy="266" r="6.2" fill="#d0f0fc" stroke="#2c3a36" stroke-width="1.2"/><path d="M177.1 263.6 L181.8 268.3 M182.0 264.7 V268.5 H178.2" fill="none" stroke="#2c3a36" stroke-width="1.3"/><circle cx="205.4" cy="259.5" r="1.75" fill="#123f8a"/><path d="M202.90 262.00 L207.40 262.00 L210.10 265.40 L209.90 266.80 L208.50 267.20 L207.50 265.60 L207.60 268.60 L209.30 274.20 L206.90 274.40 L205.30 269.80 L203.10 274.40 L200.70 274.20 L203.30 268.20 L203.30 265.20 L202.60 267.80 L200.80 267.60 L201.00 263.60Z" fill="#123f8a"/><path d="M98.5 280 V307" stroke="#b4b4b8" stroke-width="1" stroke-dasharray="1 1"/><path d="M125.5 280 V307" stroke="#b4b4b8" stroke-width="1" stroke-dasharray="1 1"/><path d="M152.5 280 V307" stroke="#b4b4b8" stroke-width="1" stroke-dasharray="1 1"/><path d="M206.5 280 V293" stroke="#b4b4b8" stroke-width="1" stroke-dasharray="1 1"/><path d="M213.0 293.5 H220.0" stroke="#b4b4b8" stroke-width="1" stroke-dasharray="1 1"/><path d="M233.5 302 V307" stroke="#b4b4b8" stroke-width="1" stroke-dasharray="1 1"/><circle cx="206.5" cy="293" r="6.2" fill="#cefce0" stroke="#2c3a36" stroke-width="1.2"/><path d="M204.1 290.6 L208.8 295.3 M209.0 291.7 V295.5 H205.2" fill="none" stroke="#2c3a36" stroke-width="1.3"/><circle cx="232.4" cy="286.5" r="1.75" fill="#123f8a"/><path d="M229.90 289.00 L234.40 289.00 L237.10 292.40 L236.90 293.80 L235.50 294.20 L234.50 292.60 L234.60 295.60 L236.30 301.20 L233.90 301.40 L232.30 296.80 L230.10 301.40 L227.70 301.20 L230.30 295.20 L230.30 292.20 L229.60 294.80 L227.80 294.60 L228.00 290.60Z" fill="#123f8a"/><path d="M98.5 307 V334" stroke="#b4b4b8" stroke-width="1" stroke-dasharray="1 1"/><path d="M125.5 307 V334" stroke="#b4b4b8" stroke-width="1" stroke-dasharray="1 1"/><path d="M152.5 307 V334" stroke="#b4b4b8" stroke-width="1" stroke-dasharray="1 1"/><path d="M233.5 307 V320" stroke="#b4b4b8" stroke-width="1" stroke-dasharray="1 1"/><path d="M240.0 320.5 H247.0" stroke="#b4b4b8" stroke-width="1" stroke-dasharray="1 1"/><path d="M260.5 329 V334" stroke="#b4b4b8" stroke-width="1" stroke-dasharray="1 1"/><circle cx="233.5" cy="320" r="6.2" fill="#d0f0fc" stroke="#2c3a36" stroke-width="1.2"/><path d="M231.1 317.6 L235.8 322.3 M236.0 318.7 V322.5 H232.2" fill="none" stroke="#2c3a36" stroke-width="1.3"/><circle cx="259.4" cy="313.5" r="1.75" fill="#123f8a"/><path d="M256.90 316.00 L261.40 316.00 L264.10 319.40 L263.90 320.80 L262.50 321.20 L261.50 319.60 L261.60 322.60 L263.30 328.20 L260.90 328.40 L259.30 323.80 L257.10 328.40 L254.70 328.20 L257.30 322.20 L257.30 319.20 L256.60 321.80 L254.80 321.60 L255.00 317.60Z" fill="#123f8a"/><path d="M98.5 334 V361" stroke="#b4b4b8" stroke-width="1" stroke-dasharray="1 1"/><path d="M125.5 334 V361" stroke="#b4b4b8" stroke-width="1" stroke-dasharray="1 1"/><path d="M152.5 334 V361" stroke="#b4b4b8" stroke-width="1" stroke-dasharray="1 1"/><path d="M260.5 334 V347" stroke="#b4b4b8" stroke-width="1" stroke-dasharray="1 1"/><path d="M261.0 347.5 H274.0" stroke="#b4b4b8" stroke-width="1" stroke-dasharray="1 1"/><circle cx="286.4" cy="340.5" r="1.75" fill="#123f8a"/><path d="M283.90 343.00 L288.40 343.00 L291.10 346.40 L290.90 347.80 L289.50 348.20 L288.50 346.60 L288.60 349.60 L290.30 355.20 L287.90 355.40 L286.30 350.80 L284.10 355.40 L281.70 355.20 L284.30 349.20 L284.30 346.20 L283.60 348.80 L281.80 348.60 L282.00 344.60Z" fill="#123f8a"/><path d="M98.5 361 V388" stroke="#b4b4b8" stroke-width="1" stroke-dasharray="1 1"/><path d="M125.5 361 V388" stroke="#b4b4b8" stroke-width="1" stroke-dasharray="1 1"/><path d="M152.5 361 V388" stroke="#b4b4b8" stroke-width="1" stroke-dasharray="1 1"/><path d="M152.5 361 V374" stroke="#b4b4b8" stroke-width="1" stroke-dasharray="1 1"/><path d="M159.0 374.5 H166.0" stroke="#b4b4b8" stroke-width="1" stroke-dasharray="1 1"/><path d="M179.5 383 V388" stroke="#b4b4b8" stroke-width="1" stroke-dasharray="1 1"/><circle cx="152.5" cy="374" r="6.2" fill="#d0f0fc" stroke="#2c3a36" stroke-width="1.2"/><path d="M150.1 371.6 L154.8 376.3 M155.0 372.7 V376.5 H151.2" fill="none" stroke="#2c3a36" stroke-width="1.3"/><path d="M171.0 383 Q171.0 376 178.5 375.5 Q186.0 376 186.0 383Z" fill="url(#gking)"/><path d="M175.5 376 L178.5 381 L181.5 376Z" fill="#f4f4f4"/><ellipse cx="178.5" cy="373" rx="3.8" ry="4.5" fill="#e8a070"/><path d="M174.7 370.5 L174.7 366.5 L176.5 368 L178.5 365.5 L180.5 368 L182.3 366.5 L182.3 370.5Z" fill="#f09040"/><rect x="174.7" y="370" width="7.6" height="2" fill="#8aa0b0"/><path d="M98.5 388 V415" stroke="#b4b4b8" stroke-width="1" stroke-dasharray="1 1"/><path d="M125.5 388 V415" stroke="#b4b4b8" stroke-width="1" stroke-dasharray="1 1"/><path d="M152.5 388 V415" stroke="#b4b4b8" stroke-width="1" stroke-dasharray="1 1"/><path d="M179.5 388 V415" stroke="#b4b4b8" stroke-width="1" stroke-dasharray="1 1"/><path d="M179.5 388 V401" stroke="#b4b4b8" stroke-width="1" stroke-dasharray="1 1"/><path d="M186.0 401.5 H193.0" stroke="#b4b4b8" stroke-width="1" stroke-dasharray="1 1"/><path d="M206.5 410 V415" stroke="#b4b4b8" stroke-width="1" stroke-dasharray="1 1"/><circle cx="179.5" cy="401" r="6.2" fill="#cefce0" stroke="#2c3a36" stroke-width="1.2"/><path d="M177.1 398.6 L181.8 403.3 M182.0 399.7 V403.5 H178.2" fill="none" stroke="#2c3a36" stroke-width="1.3"/><rect x="200.5" y="392" width="10" height="4.5" fill="#4aa020"/><path d="M202.5 396.5H208.5L205.5 399Z" fill="#2a8010"/><path d="M205.50 396.30 L207.20 400.15 L211.40 400.58 L208.26 403.40 L209.14 407.52 L205.50 405.40 L201.86 407.52 L202.74 403.40 L199.60 400.58 L203.80 400.15Z" fill="url(#gstar)" stroke="#e07020" stroke-width="0.7"/><path d="M98.5 415 V442" stroke="#b4b4b8" stroke-width="1" stroke-dasharray="1 1"/><path d="M125.5 415 V442" stroke="#b4b4b8" stroke-width="1" stroke-dasharray="1 1"/><path d="M152.5 415 V442" stroke="#b4b4b8" stroke-width="1" stroke-dasharray="1 1"/><path d="M179.5 415 V442" stroke="#b4b4b8" stroke-width="1" stroke-dasharray="1 1"/><path d="M206.5 415 V428" stroke="#b4b4b8" stroke-width="1" stroke-dasharray="1 1"/><path d="M207.0 428.5 H220.0" stroke="#b4b4b8" stroke-width="1" stroke-dasharray="1 1"/><path d="M226.0 437 Q226.0 429.5 232.5 429 Q239.0 429.5 239.0 437Z" fill="url(#gsuit)"/><path d="M230.5 429.3 L232.5 436 L234.5 429.3Z" fill="#fff"/><path d="M231.7 430 L232.5 435.5 L233.3 430Z" fill="#c02020"/><ellipse cx="232.5" cy="425" rx="3.8" ry="4.5" fill="#f0c0a0"/><path d="M228.5 425 Q228.0 419.5 232.5 419.5 Q237.0 419.5 236.5 425 Q235.5 422 232.5 422.3 Q229.5 422 228.5 425Z" fill="#6a2a10"/><path d="M98.5 442 V469" stroke="#b4b4b8" stroke-width="1" stroke-dasharray="1 1"/><path d="M125.5 442 V469" stroke="#b4b4b8" stroke-width="1" stroke-dasharray="1 1"/><path d="M152.5 442 V469" stroke="#b4b4b8" stroke-width="1" stroke-dasharray="1 1"/><path d="M179.5 442 V455" stroke="#b4b4b8" stroke-width="1" stroke-dasharray="1 1"/><path d="M180.0 455.5 H193.0" stroke="#b4b4b8" stroke-width="1" stroke-dasharray="1 1"/><circle cx="205.4" cy="448.5" r="1.75" fill="#123f8a"/><path d="M202.90 451.00 L207.40 451.00 L210.10 454.40 L209.90 455.80 L208.50 456.20 L207.50 454.60 L207.60 457.60 L209.30 463.20 L206.90 463.40 L205.30 458.80 L203.10 463.40 L200.70 463.20 L203.30 457.20 L203.30 454.20 L202.60 456.80 L200.80 456.60 L201.00 452.60Z" fill="#123f8a"/><path d="M98.5 469 V496" stroke="#b4b4b8" stroke-width="1" stroke-dasharray="1 1"/><path d="M125.5 469 V496" stroke="#b4b4b8" stroke-width="1" stroke-dasharray="1 1"/><path d="M152.5 469 V482" stroke="#b4b4b8" stroke-width="1" stroke-dasharray="1 1"/><path d="M159.0 482.5 H166.0" stroke="#b4b4b8" stroke-width="1" stroke-dasharray="1 1"/><path d="M179.5 491 V496" stroke="#b4b4b8" stroke-width="1" stroke-dasharray="1 1"/><circle cx="152.5" cy="482" r="6.2" fill="#d0f0fc" stroke="#2c3a36" stroke-width="1.2"/><path d="M150.1 479.6 L154.8 484.3 M155.0 480.7 V484.5 H151.2" fill="none" stroke="#2c3a36" stroke-width="1.3"/><circle cx="178.4" cy="475.5" r="1.75" fill="#123f8a"/><path d="M175.90 478.00 L180.40 478.00 L183.10 481.40 L182.90 482.80 L181.50 483.20 L180.50 481.60 L180.60 484.60 L182.30 490.20 L179.90 490.40 L178.30 485.80 L176.10 490.40 L173.70 490.20 L176.30 484.20 L176.30 481.20 L175.60 483.80 L173.80 483.60 L174.00 479.60Z" fill="#123f8a"/><path d="M98.5 496 V523" stroke="#b4b4b8" stroke-width="1" stroke-dasharray="1 1"/><path d="M125.5 496 V523" stroke="#b4b4b8" stroke-width="1" stroke-dasharray="1 1"/><path d="M179.5 496 V523" stroke="#b4b4b8" stroke-width="1" stroke-dasharray="1 1"/><path d="M179.5 496 V509" stroke="#b4b4b8" stroke-width="1" stroke-dasharray="1 1"/><path d="M186.0 509.5 H193.0" stroke="#b4b4b8" stroke-width="1" stroke-dasharray="1 1"/><path d="M206.5 518 V523" stroke="#b4b4b8" stroke-width="1" stroke-dasharray="1 1"/><circle cx="179.5" cy="509" r="6.2" fill="#cefce0" stroke="#2c3a36" stroke-width="1.2"/><path d="M177.1 506.6 L181.8 511.3 M182.0 507.7 V511.5 H178.2" fill="none" stroke="#2c3a36" stroke-width="1.3"/><path d="M198.5 517 Q198.5 510.5 205.5 510 Q212.5 510.5 212.5 517Z" fill="url(#gusr)" stroke="#4a8a2a" stroke-width="0.5"/><ellipse cx="205.5" cy="506.5" rx="3.6" ry="4.5" fill="#f8d0b0"/><path d="M201.7 507 Q201.0 501 205.5 501 Q210.0 501 209.3 507 Q208.5 504 205.5 504 Q202.5 504 201.7 507Z" fill="#d06030"/><path d="M98.5 523 V550" stroke="#b4b4b8" stroke-width="1" stroke-dasharray="1 1"/><path d="M125.5 523 V550" stroke="#b4b4b8" stroke-width="1" stroke-dasharray="1 1"/><path d="M179.5 523 V550" stroke="#b4b4b8" stroke-width="1" stroke-dasharray="1 1"/><path d="M206.5 523 V536" stroke="#b4b4b8" stroke-width="1" stroke-dasharray="1 1"/><path d="M207.0 536.5 H220.0" stroke="#b4b4b8" stroke-width="1" stroke-dasharray="1 1"/><circle cx="232.4" cy="529.5" r="1.75" fill="#123f8a"/><path d="M229.90 532.00 L234.40 532.00 L237.10 535.40 L236.90 536.80 L235.50 537.20 L234.50 535.60 L234.60 538.60 L236.30 544.20 L233.90 544.40 L232.30 539.80 L230.10 544.40 L227.70 544.20 L230.30 538.20 L230.30 535.20 L229.60 537.80 L227.80 537.60 L228.00 533.60Z" fill="#123f8a"/><path d="M98.5 550 V577" stroke="#b4b4b8" stroke-width="1" stroke-dasharray="1 1"/><path d="M125.5 550 V577" stroke="#b4b4b8" stroke-width="1" stroke-dasharray="1 1"/><path d="M179.5 550 V577" stroke="#b4b4b8" stroke-width="1" stroke-dasharray="1 1"/><path d="M179.5 550 V563" stroke="#b4b4b8" stroke-width="1" stroke-dasharray="1 1"/><path d="M180.0 563.5 H193.0" stroke="#b4b4b8" stroke-width="1" stroke-dasharray="1 1"/><circle cx="205.4" cy="556.5" r="1.75" fill="#123f8a"/><path d="M202.90 559.00 L207.40 559.00 L210.10 562.40 L209.90 563.80 L208.50 564.20 L207.50 562.60 L207.60 565.60 L209.30 571.20 L206.90 571.40 L205.30 566.80 L203.10 571.40 L200.70 571.20 L203.30 565.20 L203.30 562.20 L202.60 564.80 L200.80 564.60 L201.00 560.60Z" fill="#123f8a"/><path d="M98.5 577 V604" stroke="#b4b4b8" stroke-width="1" stroke-dasharray="1 1"/><path d="M125.5 577 V604" stroke="#b4b4b8" stroke-width="1" stroke-dasharray="1 1"/><path d="M179.5 577 V604" stroke="#b4b4b8" stroke-width="1" stroke-dasharray="1 1"/><path d="M179.5 577 V590" stroke="#b4b4b8" stroke-width="1" stroke-dasharray="1 1"/><path d="M186.0 590.5 H193.0" stroke="#b4b4b8" stroke-width="1" stroke-dasharray="1 1"/><path d="M206.5 599 V604" stroke="#b4b4b8" stroke-width="1" stroke-dasharray="1 1"/><circle cx="179.5" cy="590" r="6.2" fill="#d0f0fc" stroke="#2c3a36" stroke-width="1.2"/><path d="M177.1 587.6 L181.8 592.3 M182.0 588.7 V592.5 H178.2" fill="none" stroke="#2c3a36" stroke-width="1.3"/><circle cx="205.4" cy="583.5" r="1.75" fill="#123f8a"/><path d="M202.90 586.00 L207.40 586.00 L210.10 589.40 L209.90 590.80 L208.50 591.20 L207.50 589.60 L207.60 592.60 L209.30 598.20 L206.90 598.40 L205.30 593.80 L203.10 598.40 L200.70 598.20 L203.30 592.20 L203.30 589.20 L202.60 591.80 L200.80 591.60 L201.00 587.60Z" fill="#123f8a"/><path d="M98.5 604 V631" stroke="#b4b4b8" stroke-width="1" stroke-dasharray="1 1"/><path d="M125.5 604 V631" stroke="#b4b4b8" stroke-width="1" stroke-dasharray="1 1"/><path d="M179.5 604 V631" stroke="#b4b4b8" stroke-width="1" stroke-dasharray="1 1"/><path d="M206.5 604 V617" stroke="#b4b4b8" stroke-width="1" stroke-dasharray="1 1"/><path d="M213.0 617.5 H220.0" stroke="#b4b4b8" stroke-width="1" stroke-dasharray="1 1"/><path d="M233.5 626 V631" stroke="#b4b4b8" stroke-width="1" stroke-dasharray="1 1"/><circle cx="206.5" cy="617" r="6.2" fill="#cefce0" stroke="#2c3a36" stroke-width="1.2"/><path d="M204.1 614.6 L208.8 619.3 M209.0 615.7 V619.5 H205.2" fill="none" stroke="#2c3a36" stroke-width="1.3"/><circle cx="232.4" cy="610.5" r="1.75" fill="#123f8a"/><path d="M229.90 613.00 L234.40 613.00 L237.10 616.40 L236.90 617.80 L235.50 618.20 L234.50 616.60 L234.60 619.60 L236.30 625.20 L233.90 625.40 L232.30 620.80 L230.10 625.40 L227.70 625.20 L230.30 619.20 L230.30 616.20 L229.60 618.80 L227.80 618.60 L228.00 614.60Z" fill="#123f8a"/><path d="M98.5 631 V658" stroke="#b4b4b8" stroke-width="1" stroke-dasharray="1 1"/><path d="M125.5 631 V658" stroke="#b4b4b8" stroke-width="1" stroke-dasharray="1 1"/><path d="M179.5 631 V658" stroke="#b4b4b8" stroke-width="1" stroke-dasharray="1 1"/><path d="M233.5 631 V644" stroke="#b4b4b8" stroke-width="1" stroke-dasharray="1 1"/><path d="M240.0 644.5 H247.0" stroke="#b4b4b8" stroke-width="1" stroke-dasharray="1 1"/><path d="M260.5 653 V658" stroke="#b4b4b8" stroke-width="1" stroke-dasharray="1 1"/><circle cx="233.5" cy="644" r="6.2" fill="#d0f0fc" stroke="#2c3a36" stroke-width="1.2"/><path d="M231.1 641.6 L235.8 646.3 M236.0 642.7 V646.5 H232.2" fill="none" stroke="#2c3a36" stroke-width="1.3"/><circle cx="259.4" cy="637.5" r="1.75" fill="#123f8a"/><path d="M256.90 640.00 L261.40 640.00 L264.10 643.40 L263.90 644.80 L262.50 645.20 L261.50 643.60 L261.60 646.60 L263.30 652.20 L260.90 652.40 L259.30 647.80 L257.10 652.40 L254.70 652.20 L257.30 646.20 L257.30 643.20 L256.60 645.80 L254.80 645.60 L255.00 641.60Z" fill="#123f8a"/></g></svg><svg style="left:46px;top:396px" width="10" height="10" viewBox="0 0 10 10"><path d="M3.5 1.5V8.5L7 5Z" fill="#606060"/></svg><div class="a" style="left:61px;top:655px;width:311px;height:26px;border:1px solid #c8c8c8;background:#fff"></div><div class="t" style="left:62.5px;top:662px">80</div><div class="a" style="left:502px;top:655px;width:79px;height:26px;border:1px solid #c8c8c8;background:#fff"></div><div class="t" style="left:502px;top:662px;width:76px;text-align:right">MAX=50</div><div class="a" style="left:702px;top:655px;width:54px;height:26px;border:1px solid #c8c8c8;background:#fff"></div><div class="t" style="left:702px;top:662px;width:51px;text-align:right">MAX=79</div><div class="a" style="left:760px;top:655px;width:45px;height:26px;border:1px solid #c8c8c8;background:#fff"></div><div class="t" style="left:760px;top:662px;width:42px;text-align:right">MAX=7</div><div class="a" style="left:809px;top:655px;width:111px;height:26px;border:1px solid #c8c8c8;background:#fff"></div><div class="t" style="left:809px;top:662px;width:108px;text-align:right">0,000</div><div class="a" style="left:46px;top:171px;width:1px;height:513px;background:#cccccc"></div><div class="a" style="left:1057px;top:398px;width:1px;height:15px;background:repeating-linear-gradient(180deg,#808080 0 1px,transparent 1px 2px)"></div><div class="a" style="left:1332px;top:126px;width:17px;height:559px;background:#f0f0f0"></div><div class="a" style="left:1333px;top:160px;width:15px;height:128px;background:#cdcdcd"></div><svg style="left:1334px;top:141px" width="14" height="12" viewBox="0 0 14 12"><path d="M1.5 10L7 4.5L12.5 10" fill="none" stroke="#606060" stroke-width="2.6"/></svg><svg style="left:1334px;top:657px" width="14" height="12" viewBox="0 0 14 12"><path d="M1.5 2.5L7 8L12.5 2.5" fill="none" stroke="#606060" stroke-width="2.6"/></svg>
<svg style="left:1060px;top:122px" width="270" height="266" viewBox="1060 122 270 266">
<defs>
<clipPath id="pc"><circle cx="1192.7" cy="254.5" r="120.5"/></clipPath>
<filter id="bl4" x="-30%" y="-30%" width="160%" height="160%"><feGaussianBlur stdDeviation="2.6"/></filter>
<filter id="bl2" x="-30%" y="-30%" width="160%" height="160%"><feGaussianBlur stdDeviation="2"/></filter>
<filter id="bl2s" x="-30%" y="-30%" width="160%" height="160%"><feGaussianBlur stdDeviation="1.3"/></filter>
<filter id="bl1" x="-30%" y="-30%" width="160%" height="160%"><feGaussianBlur stdDeviation="0.8"/></filter>
<linearGradient id="gdh" x1="0" y1="0" x2="0" y2="1"><stop offset="0" stop-color="#a87458"/><stop offset="1" stop-color="#6e4632"/></linearGradient>
<linearGradient id="gneck" x1="0" y1="0" x2="1" y2="1"><stop offset="0" stop-color="#e8b292"/><stop offset="0.5" stop-color="#f4c8aa"/><stop offset="1" stop-color="#eebc9c"/></linearGradient>
</defs>
<g clip-path="url(#pc)">
<rect x="1060" y="122" width="270" height="266" fill="#fff"/>
<g filter="url(#bl4)">
<path d="M1134 200 L1218 188 L1238 262 Q1252 292 1272 304 Q1302 318 1314 342 L1310 392 L1172 392 L1166 300 L1140 270Z" fill="#f2c6aa"/>
<path d="M1140 160 Q1160 148 1186 145 Q1212 148 1234 165 Q1256 184 1268 205 Q1274 228 1266 248 Q1258 266 1250 275 L1238 272 Q1232 232 1222 205 Q1190 190 1150 205 Q1136 240 1148 272 Q1160 300 1168 330 L1196 392 L1160 392 Q1130 365 1112 345 Q1092 322 1082 295 Q1076 268 1080 245 Q1090 205 1112 180Z" fill="#d19e78"/>
<path d="M1140 168 Q1180 152 1220 165 Q1248 182 1258 205 Q1240 190 1215 180 Q1180 170 1150 182Z" fill="#ecd0b2"/>
<path d="M1150 152 Q1190 140 1228 158 Q1240 170 1232 176 Q1200 165 1160 172Z" fill="#9c6a4c"/>
<path d="M1080 262 Q1082 300 1100 325 Q1120 352 1150 376 L1162 360 Q1140 330 1128 300 Q1118 270 1116 240 Q1100 240 1080 262Z" fill="#efdccb"/>
<path d="M1078 320 Q1095 350 1130 380 L1080 392Z" fill="#ffffff"/>
</g>
<g filter="url(#bl2s)" fill="none" stroke-linecap="round" opacity="0.65">
<path d="M1092 232 Q1084 262 1092 290 Q1100 318 1090 335" stroke="#ffffff" stroke-width="3" opacity="0.8"/>
<path d="M1106 286 Q1116 312 1106 334 Q1100 350 1116 368" stroke="#ffffff" stroke-width="4" opacity="0.85"/>
<path d="M1126 318 Q1136 340 1130 358 Q1128 370 1140 382" stroke="#ffffff" stroke-width="3" opacity="0.7"/>
<path d="M1118 205 Q1100 230 1108 260 Q1116 285 1102 310" stroke="#c08a66" stroke-width="3"/>
<path d="M1128 215 Q1115 245 1125 275 Q1135 300 1125 330 Q1120 350 1135 365" stroke="#b88460" stroke-width="3"/>
<path d="M1142 292 Q1152 320 1148 345 Q1145 362 1156 378" stroke="#ba8664" stroke-width="3"/>
<path d="M1150 195 Q1180 176 1216 186" stroke="#b68260" stroke-width="3"/>
<path d="M1246 192 Q1262 212 1262 240" stroke="#f0d6be" stroke-width="3"/>
</g>
<g filter="url(#bl2)">
<path d="M1232 208 Q1252 224 1258 250 Q1258 270 1248 280 Q1236 272 1234 250Z" fill="#8a5a40"/>
<path d="M1168 300 Q1184 306 1200 300 L1210 392 L1180 392 Q1170 340 1168 300Z" fill="url(#gdh)"/>
<path d="M1204 270 Q1230 262 1240 272 Q1250 292 1270 304 Q1300 316 1312 340 L1310 392 L1206 392 Q1204 340 1204 300Z" fill="url(#gneck)"/>
<path d="M1133 205 Q1160 188 1198 185 Q1216 195 1221 222 Q1223 258 1214 282 Q1200 302 1184 302 Q1166 296 1152 274 Q1138 255 1133 232Z" fill="#f7d3bb"/>
<path d="M1126 168 Q1150 150 1190 150 Q1218 160 1222 205 Q1200 184 1165 188 Q1142 192 1133 207 Q1122 190 1126 168Z" fill="#d19e78"/>
<path d="M1136 180 Q1165 165 1200 168 Q1215 176 1220 195 Q1195 178 1160 182Z" fill="#e8c8a8"/>
<ellipse cx="1225" cy="224" rx="7" ry="13" fill="#edbb9a"/>
<path d="M1196 300 Q1215 292 1228 280 Q1232 300 1222 312 Q1205 312 1196 300Z" fill="#e8b090" opacity="0.5"/>
</g>
<g filter="url(#bl1)">
<path d="M1156 223 Q1170 216 1184 220" stroke="#a87a60" stroke-width="2" fill="none"/>
<path d="M1136 239 Q1144 234 1152 237" stroke="#a87a60" stroke-width="1.8" fill="none"/>
<ellipse cx="1146" cy="246" rx="4.6" ry="2.4" fill="#4a3a38" transform="rotate(-20 1146 246)"/>
<ellipse cx="1175" cy="231" rx="5.2" ry="2.6" fill="#4a3a38" transform="rotate(-20 1175 231)"/>
<path d="M1156 250 Q1152 260 1160 264" stroke="#e0a68c" stroke-width="2" fill="none"/>
<path d="M1161 275 Q1178 272 1193 264 Q1192 282 1176 286 Q1164 285 1161 275Z" fill="#de8482"/>
<path d="M1164 276 Q1178 273 1190 267 Q1186 277 1174 279Z" fill="#fffaf4"/>
<circle cx="1225" cy="251" r="2.4" fill="#8cc4d8"/>
</g>
</g>
<circle cx="1192.7" cy="254.5" r="120.5" fill="none" stroke="#1a1a1a" stroke-width="1.3"/>
</svg><div class="t" style="left:1071px;top:406px;font-size:33.5px;line-height:38px;color:#0a0a0a">Dystrybutor 17</div><div class="a" style="left:1072px;top:465px;width:239px;height:1px;background:#6a6a6a"></div><div class="t" style="left:1072px;top:488px;font-size:18px;line-height:22px;font-weight:bold;color:#82bccb">Hierarchia</div><div class="t" style="left:1072px;top:657.5px;font-size:18.5px;line-height:22px;font-weight:bold;color:#82bccb">Mentor</div><div class="t" style="left:1092.5px;top:514px;font-size:16px;line-height:19px;color:#111">1.</div><div class="t" style="left:1129.5px;top:514px;font-size:16px;line-height:19px;color:#111">Główny</div><div class="t" style="left:1108.5px;top:539px;font-size:16px;line-height:19px;color:#111">2.</div><div class="t" style="left:1146.0px;top:539px;font-size:16px;line-height:19px;color:#111">Dystrybutor 1</div><div class="t" style="left:1124.5px;top:564px;font-size:16px;line-height:19px;color:#111">3.</div><div class="t" style="left:1162.0px;top:564px;font-size:16px;line-height:19px;color:#111">Dystrybutor 3</div><div class="t" style="left:1140.5px;top:589px;font-size:16px;line-height:19px;color:#111">4.</div><div class="t" style="left:1178.0px;top:589px;font-size:16px;line-height:19px;color:#111">Dystrybutor 5</div><div class="t" style="left:1156.5px;top:614px;font-size:16px;line-height:19px;color:#111">5.</div><div class="t" style="left:1194.0px;top:614px;font-size:16px;line-height:19px;color:#111">Dystrybutor 17</div><svg style="left:0;top:0" width="1366" height="700" viewBox="0 0 1366 700"><defs><radialGradient id="gball" cx="0.4" cy="0.35" r="0.6"><stop offset="0" stop-color="#3c5a7c"/><stop offset="1" stop-color="#0e2a48"/></radialGradient></defs><circle cx="1080" cy="521" r="6" fill="url(#gball)"/><g transform="translate(1116.5 508.5) scale(1)"><circle cx="-0.1" cy="6.5" r="1.75" fill="#123f8a"/><path d="M-2.60 9.00 L1.90 9.00 L4.60 12.40 L4.40 13.80 L3.00 14.20 L2.00 12.60 L2.10 15.60 L3.80 21.20 L1.40 21.40 L-0.20 16.80 L-2.40 21.40 L-4.80 21.20 L-2.20 15.20 L-2.20 12.20 L-2.90 14.80 L-4.70 14.60 L-4.50 10.60Z" fill="#123f8a"/></g><circle cx="1080" cy="546" r="6" fill="url(#gball)"/><circle cx="1096" cy="546" r="6" fill="url(#gball)"/><g transform="translate(1133.0 536) scale(0.88)"><path d="M-7 21 Q-7 14.5 0 14 Q7 14.5 7 21Z" fill="url(#gusr)" stroke="#4a8a2a" stroke-width="0.5"/><ellipse cx="0" cy="10.5" rx="3.6" ry="4.5" fill="#f8d0b0"/><path d="M-3.8 11 Q-4.5 5 0 5 Q4.5 5 3.8 11 Q3 8 0 8 Q-3 8 -3.8 11Z" fill="#d06030"/></g><circle cx="1080" cy="571" r="6" fill="url(#gball)"/><circle cx="1096" cy="571" r="6" fill="url(#gball)"/><circle cx="1112" cy="571" r="6" fill="url(#gball)"/><g transform="translate(1149.0 562)"><rect x="-7" y="11" width="14" height="7" fill="#e8963a" stroke="#a05a20" stroke-width="0.6"/><rect x="-7" y="11" width="14" height="2.5" fill="#f8c070"/><path d="M-4 11 Q-4 7 0 7 Q4 7 4 11Z" fill="#3a5a9a"/><ellipse cx="0" cy="4.5" rx="2.8" ry="3.2" fill="#f0c098"/><path d="M-2.8 4 Q-3 1 0 1 Q3 1 2.8 4Z" fill="#7a4020"/></g><circle cx="1080" cy="596" r="6" fill="url(#gball)"/><circle cx="1096" cy="596" r="6" fill="url(#gball)"/><circle cx="1112" cy="596" r="6" fill="url(#gball)"/><circle cx="1128" cy="596" r="6" fill="url(#gball)"/><g transform="translate(1165.0 586) scale(0.88)"><path d="M-7.5 22 Q-7.5 15 0 14.5 Q7.5 15 7.5 22Z" fill="url(#gking)"/><path d="M-3 15 L0 20 L3 15Z" fill="#f4f4f4"/><ellipse cx="0" cy="12" rx="3.8" ry="4.5" fill="#e8a070"/><path d="M-3.8 9.5 L-3.8 5.5 L-2 7 L0 4.5 L2 7 L3.8 5.5 L3.8 9.5Z" fill="#f09040"/><rect x="-3.8" y="9" width="7.6" height="2" fill="#8aa0b0"/></g><circle cx="1080" cy="621" r="6" fill="url(#gball)"/><circle cx="1096" cy="621" r="6" fill="url(#gball)"/><circle cx="1112" cy="621" r="6" fill="url(#gball)"/><circle cx="1128" cy="621" r="6" fill="url(#gball)"/><circle cx="1144" cy="621" r="6" fill="url(#gball)"/><g transform="translate(1181.0 611) scale(0.88)"><rect x="-5" y="4" width="10" height="4.5" fill="#4aa020"/><path d="M-3 8.5H3L0 11Z" fill="#2a8010"/><path d="M0.00 8.30 L1.70 12.15 L5.90 12.58 L2.76 15.40 L3.64 19.52 L0.00 17.40 L-3.64 19.52 L-2.76 15.40 L-5.90 12.58 L-1.70 12.15Z" fill="url(#gstar)" stroke="#e07020" stroke-width="0.7"/></g></svg><div class="a" style="left:45px;top:683px;width:1006px;height:2px;background:#c4c4c4"></div><div class="a" style="left:1051px;top:685px;width:298px;height:1px;background:#c0c0c0"></div><div class="a" style="left:258px;top:688px;width:1091px;height:1px;background:#c0c0c0"></div><div class="a" style="left:1348px;top:685px;width:1px;height:4px;background:#c0c0c0"></div><div class="a" style="left:17px;top:685px;width:3px;height:1px;background:#c0c0c0"></div><div class="a" style="left:17px;top:685px;width:1px;height:4px;background:#c0c0c0"></div><div class="a" style="left:19px;top:685px;width:116px;height:43px;border:1px solid #c8c8c8;background:#f3f3f3"></div><div class="a" style="left:134px;top:685px;width:125px;height:45px;border:1px solid #c8c8c8;border-bottom:none;background:#fff"></div><div class="a" style="left:134px;top:727px;width:125px;height:3px;background:#0ea0ea"></div><svg style="left:0;top:680px" width="300" height="60" viewBox="0 680 300 60"><defs><linearGradient id="gbook" x1="0" y1="0" x2="1" y2="0"><stop offset="0" stop-color="#1e3a6a"/><stop offset="0.2" stop-color="#2e5a90"/><stop offset="0.25" stop-color="#6ab8ea"/><stop offset="1" stop-color="#3e8cd0"/></linearGradient><linearGradient id="gwin" x1="0" y1="0" x2="0" y2="1"><stop offset="0" stop-color="#f4f8fc"/><stop offset="1" stop-color="#dce6f2"/></linearGradient></defs><path d="M33 695 Q33 693 35 693 H55 V720 H35 Q32 720 32 718Z" fill="url(#gbook)" stroke="#1e3a60" stroke-width="0.8"/><path d="M36 694.5H54.5" stroke="#d0eaff" stroke-width="1"/><rect x="148.5" y="698.5" width="23" height="20" rx="1" fill="url(#gwin)" stroke="#5a78a8"/><rect x="149" y="699" width="22" height="3.5" fill="#6aa8e0"/><rect x="167" y="699.5" width="2.5" height="2" fill="#e04040"/><path d="M110 704L117 710.5M117 704L110 710.5" stroke="#1aa0e4" stroke-width="2.2"/><path d="M233.5 704L240.5 710.5M240.5 704L233.5 710.5" stroke="#1aa0e4" stroke-width="2.2"/></svg><div class="t" style="left:65.5px;top:701px;font-size:10.5px;line-height:13px;letter-spacing:-0.45px;color:#505050">Klienci</div><div class="t" style="left:181px;top:702px;font-size:10.5px;line-height:13px;color:#1aa0e4">Drzewo</div><svg style="left:0;top:725px" width="1366" height="30" viewBox="0 725 1366 30"><circle cx="31" cy="739.8" r="8" fill="#1e7ac0"/><circle cx="31" cy="735.8" r="1.3" fill="#fff"/><rect x="29.8" y="738" width="2.4" height="6" fill="#fff"/><defs><linearGradient id="gdb" x1="0" y1="0" x2="1" y2="0"><stop offset="0" stop-color="#f0a040"/><stop offset="0.5" stop-color="#fcd890"/><stop offset="1" stop-color="#e88a28"/></linearGradient></defs><rect x="209.5" y="732.5" width="11" height="14" rx="3" fill="url(#gdb)" stroke="#c87020" stroke-width="0.7"/><path d="M209.5 737H220.5M209.5 741.5H220.5" stroke="#c87020" stroke-width="0.7"/><path d="M343.5 747 Q343.5 741 351 741 Q358.5 741 358.5 747Z" fill="#5aa83a"/><ellipse cx="351" cy="737" rx="3.4" ry="4.2" fill="#f4c4a0"/><path d="M347.5 737 Q347 732.5 351 732.5 Q355 732.5 354.5 737 Q353.5 734.5 351 734.8 Q348.5 734.5 347.5 737Z" fill="#c86030"/><rect x="487.5" y="733.5" width="13" height="13" fill="#fff" stroke="#5a6a9a"/><rect x="487.5" y="733.5" width="13" height="2.5" fill="#e04040"/><text x="494" y="745" text-anchor="middle" font-family="Liberation Serif" font-size="8.5" font-weight="bold" fill="#2a3a7a">31</text></svg><div class="a" style="left:197px;top:733px;width:1px;height:15px;background:#b0b0b0"></div><div class="a" style="left:333px;top:733px;width:1px;height:15px;background:#b0b0b0"></div><div class="a" style="left:476px;top:733px;width:1px;height:15px;background:#b0b0b0"></div><div class="a" style="left:595px;top:733px;width:1px;height:15px;background:#b0b0b0"></div><div class="a" style="left:708px;top:733px;width:1px;height:15px;background:#b0b0b0"></div><div class="a" style="left:1324px;top:733px;width:1px;height:15px;background:#b0b0b0"></div><div class="t" style="left:55.5px;top:735px;color:#222">7.2.9110.10 Professional</div><div class="t" style="left:239px;top:735px;color:#222">localhost (utf8)</div><div class="t" style="left:375px;top:735px;color:#222;letter-spacing:-0.3px">NIKOLAY (MAIN)</div><div class="t" style="left:519px;top:735px;color:#222">26.10.2022</div><div class="t" style="left:623.5px;top:735px;color:#222">0:00:00:003</div><svg style="left:1330px;top:730px" width="20" height="20" viewBox="1330 730 20 20"><path fill="#707070" d="M1345 737h2v2h-2zM1341 741h2v2h-2zM1345 741h2v2h-2zM1337 745h2v2h-2zM1341 745h2v2h-2zM1345 745h2v2h-2z"/><path fill="#d4d4d4" d="M1345 736h2v1h-2zM1344 737h1v2h-1zM1347 737h1v2h-1zM1345 739h2v1h-2zM1341 740h2v1h-2zM1340 741h1v2h-1zM1343 741h1v2h-1zM1341 743h2v1h-2zM1345 740h2v1h-2zM1344 741h1v2h-1zM1347 741h1v2h-1zM1345 743h2v1h-2zM1337 744h2v1h-2zM1336 745h1v2h-1zM1339 745h1v2h-1zM1337 747h2v1h-2zM1341 744h2v1h-2zM1340 745h1v2h-1zM1343 745h1v2h-1zM1341 747h2v1h-2zM1345 744h2v1h-2zM1344 745h1v2h-1zM1347 745h1v2h-1zM1345 747h2v1h-2z"/></svg></body></html>
